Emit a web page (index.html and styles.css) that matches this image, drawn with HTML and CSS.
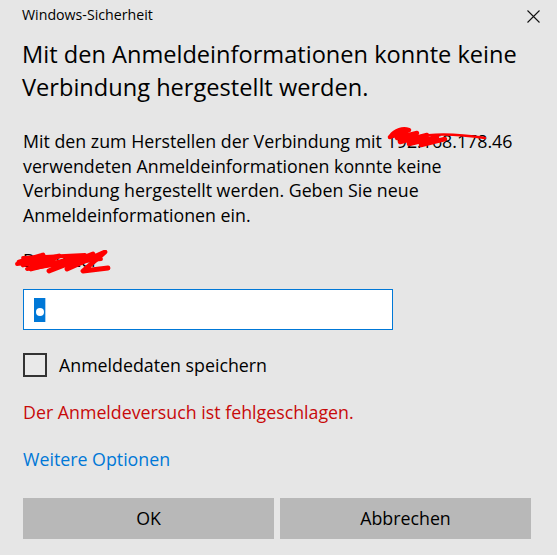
FILE: index.html
```html
<!DOCTYPE html>
<html lang="de">
<head>
<meta charset="utf-8">
<title>Windows-Sicherheit</title>
<link rel="stylesheet" href="styles.css">
</head>
<body>
<div class="dialog">
  <div class="titlebar">
    <span class="title">Windows-Sicherheit</span>
    <svg class="close" viewBox="0 0 13 13" aria-label="Schließen"><path d="M0.5 0.5 L12.5 12.5 M12.5 0.5 L0.5 12.5" stroke="#111" stroke-width="1.1" fill="none"/></svg>
  </div>
  <div class="content">
    <h1 class="heading">Mit den Anmeldeinformationen konnte keine<br>Verbindung hergestellt werden.</h1>
    <p class="message">Mit den zum Herstellen der Verbindung mit <span class="redact">192.168.178.46<svg class="scribble scribble-ip" viewBox="0 0 100 21"><path d="M4 9 C8 3 16 1 22 3 M3 10 L20 4 L10 11 L30 6 L13 15 L40 8 L22 17 L50 10 L34 18 L58 12" stroke="#ff0000" stroke-width="4.4" stroke-linecap="round" stroke-linejoin="round" fill="none"/><path d="M28 10 C48 6 72 7 98 11" stroke="#ff0000" stroke-width="2.6" stroke-linecap="round" fill="none"/></svg></span><br>verwendeten Anmeldeinformationen konnte keine<br>Verbindung hergestellt werden. Geben Sie neue<br>Anmeldeinformationen ein.</p>
    <div class="user-label"><span class="user-text">Benutzer</span><svg class="scribble scribble-user" viewBox="0 0 96 24"><path d="M4 12 L28 5 L8 15 L44 6 L16 19 L60 8 L34 21 L78 4 L52 19 L90 2 L68 21 L93 18" stroke="#ff0000" stroke-width="4.8" stroke-linecap="round" stroke-linejoin="round" fill="none"/><path d="M2 14 L30 10 L12 19 L50 13 M8 8 L70 5 L40 14 L86 9" stroke="#ff0000" stroke-width="3.8" stroke-linecap="round" stroke-linejoin="round" fill="none"/></svg></div>
    <div class="password"><span class="selection"><span class="bullet"></span></span></div>
    <div class="remember"><span class="checkbox"></span><span class="remember-text">Anmeldedaten speichern</span></div>
    <p class="error">Der Anmeldeversuch ist fehlgeschlagen.</p>
    <p class="more">Weitere Optionen</p>
    <div class="buttons">
      <button class="btn">OK</button>
      <button class="btn">Abbrechen</button>
    </div>
  </div>
</div>
</body>
</html>
```
FILE: styles.css
```css
html, body {
  margin: 0;
  padding: 0;
  background: #e6e6e6;
}
body {
  font-family: "Open Sans", "Noto Sans", sans-serif;
  color: #000;
  width: 557px;
  height: 555px;
  overflow: hidden;
}
.dialog {
  width: 557px;
}
.titlebar {
  display: flex;
  justify-content: space-between;
  align-items: flex-start;
  padding: 5px 17px 0 22px;
  height: 20px;
}
.title {
  font-size: 14.2px;
  line-height: 20px;
  color: #000;
}
.close {
  width: 13px;
  height: 13px;
  margin-top: 5px;
}
.content {
  padding: 0 26px 0 23px;
}
.heading {
  margin: 12.5px 0 0 -1px;
  font-size: 23.6px;
  line-height: 33.3px;
  font-weight: 400;
}
.message {
  margin: 25px 0 0;
  font-size: 17.8px;
  line-height: 24.5px;
}
.redact {
  position: relative;
}
.scribble {
  position: absolute;
}
.scribble-ip {
  left: 0;
  top: -2px;
  width: 100px;
  height: 21px;
}
.user-label {
  position: relative;
  margin-top: 20.7px;
  font-size: 17.8px;
  line-height: 24.5px;
  height: 24.5px;
}
.scribble-user {
  left: -8px;
  top: 2px;
  width: 96px;
  height: 24px;
}
.password {
  margin-top: 16.5px;
  width: 370px;
  height: 41px;
  box-sizing: border-box;
  border: 1px solid #0078d7;
  background: #fff;
  display: flex;
  align-items: flex-start;
  padding: 8px 0 0 10px;
}
.selection {
  display: flex;
  align-items: center;
  width: 12px;
  height: 24.5px;
  background: #0078d7;
  border-right: 1px solid #a8d0f2;
  padding: 3px 0 0 2px;
  box-sizing: border-box;
}
.bullet {
  width: 8px;
  height: 8px;
  border-radius: 50%;
  background: #fff;
}
.remember {
  margin-top: 23px;
  display: flex;
  align-items: center;
  gap: 12px;
  height: 24px;
  font-size: 17.8px;
  line-height: 24.5px;
}
.checkbox {
  width: 24px;
  height: 24px;
  box-sizing: border-box;
  border: 2px solid #333;
  background: #e9e9e9;
  flex: none;
}
.error {
  margin: 23.3px 0 0;
  font-size: 17.8px;
  line-height: 24.5px;
  color: #c80a0a;
}
.more {
  margin: 22.9px 0 0;
  font-size: 17.8px;
  line-height: 24.5px;
  color: #0078d7;
}
.buttons {
  margin-top: 25.8px;
  display: grid;
  grid-template-columns: 1fr 1fr;
  gap: 6px;
}
.btn {
  height: 41px;
  background: #b8b8b8;
  border: none;
  padding: 0;
  font-family: inherit;
  font-size: 17.8px;
  line-height: 24.5px;
  color: #000;
}
```
